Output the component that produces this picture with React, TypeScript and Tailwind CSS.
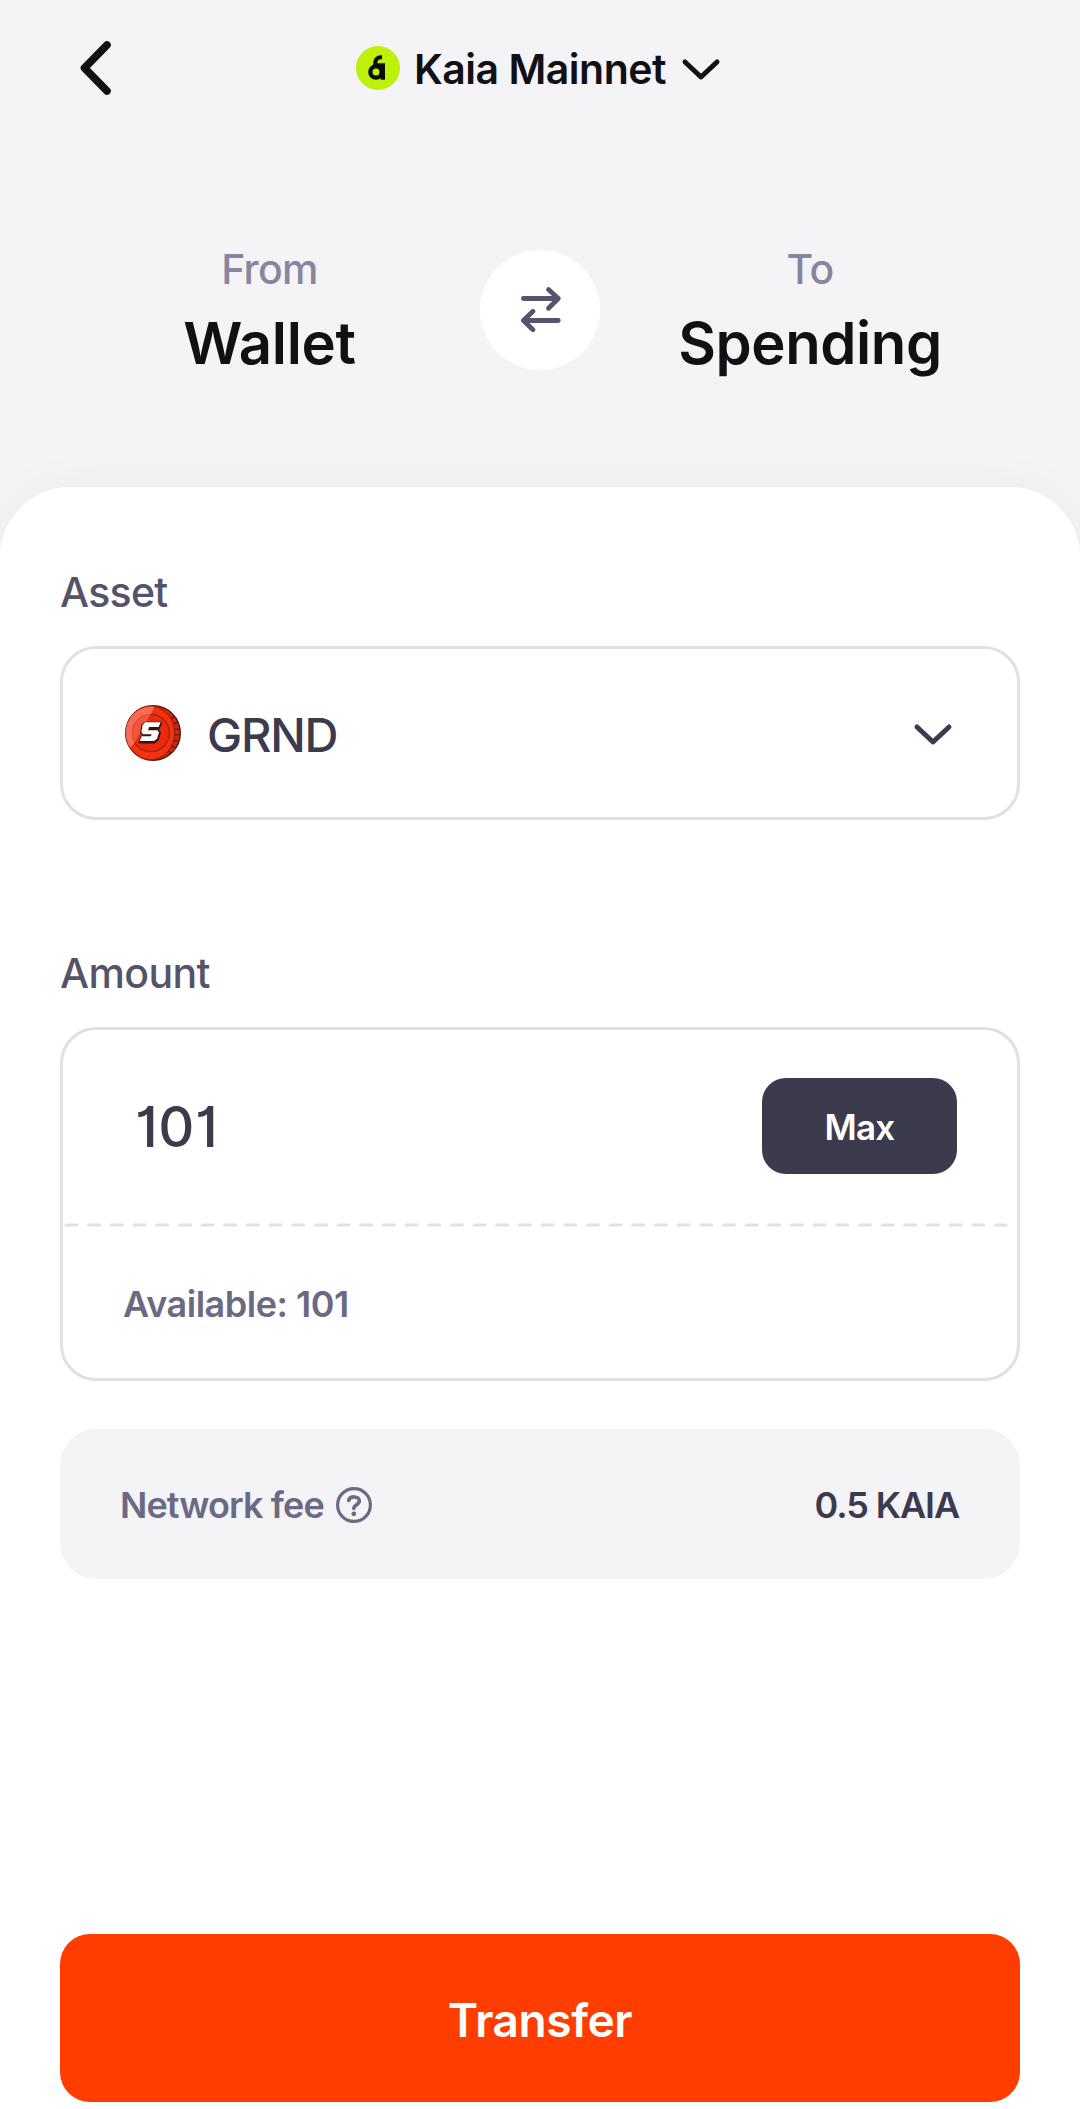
import React, { useState } from 'react';

const AVAILABLE = '101';

const KaiaLogo: React.FC = () => (
  <svg viewBox="0 0 132 132" className="w-11 h-11 shrink-0">
    <circle cx="66" cy="66" r="66" fill="#bff009" />
    <g fill="none" stroke="#0b0c0a" strokeWidth="13">
      <circle cx="60" cy="78" r="17" />
      <path d="M60 58.5H87M80.5 52V101" />
      <path d="M78 34C63 33 57 40 57 60" strokeWidth="12" />
    </g>
  </svg>
);

const CoinIcon: React.FC = () => (
  <svg viewBox="0 0 168 168" className="w-14 h-14 shrink-0">
    <circle cx="84" cy="84" r="82" fill="#cf260d" stroke="#4f160d" strokeWidth="4" />
    {/* Ridged edge */}
    <path
      d="M133 43l15-7M143 57l16-4M148 73l18-1M149 89h17M145 105l17 4M137 121l16 8M126 134l12 11"
      stroke="#6b190d"
      strokeWidth="4"
    />
    <ellipse cx="76" cy="84" rx="73" ry="80" fill="#f3310f" stroke="#8e1c0b" strokeWidth="3" />
    <circle cx="77" cy="84" r="56" fill="#e92b0c" stroke="#9d2410" strokeWidth="4" />
    <path d="M88 4A80 80 0 0 0 15 128L29 113A56 56 0 0 1 58 31L78 28Z" fill="#ff8a78" fillOpacity=".65" />
    <path d="M76 28A56 56 0 0 0 29 113Z" fill="#ff6e59" fillOpacity=".6" />
    <path
      d="M60 54H108L101 70H74L72 76H99L104 83L98 103L88 112H44L50 96H77L79 90H56L49 82L53 61Z"
      fill="#351410"
      stroke="#351410"
      strokeWidth="7"
      strokeLinejoin="round"
    />
    <path d="M60 52H107L101 66H72L69 76H97L102 82L96 101L87 108H44L50 94H77L80 88H54L49 81L53 60Z" fill="#fff" />
  </svg>
);

const ChevronDown: React.FC<{ className: string }> = ({ className }) => (
  <svg viewBox="0 0 40 24" className={`w-10 h-6 shrink-0 ${className}`}>
    <path d="M4 4L20 19L36 4" fill="none" stroke="currentColor" strokeWidth="5" strokeLinecap="round" strokeLinejoin="round" />
  </svg>
);

const App: React.FC = () => {
  const [amount, setAmount] = useState(AVAILABLE);
  const [route, setRoute] = useState(['Wallet', 'Spending']);

  return (
    <div className="w-full h-[2109px] flex flex-col bg-[#f4f4f7] font-['Inter',sans-serif] overflow-hidden">
      <header className="h-[136px] shrink-0 grid grid-cols-[356px_1fr_356px] items-center">
        <button className="pl-[76px] text-[#111115]">
          <svg viewBox="0 0 40 60" className="w-10 h-15">
            <path d="M31 7L8.5 30L31 53" fill="none" stroke="currentColor" strokeWidth="7.6" strokeLinecap="round" strokeLinejoin="round" />
          </svg>
        </button>
        <button className="flex items-center whitespace-nowrap text-[#111115]">
          <KaiaLogo />
          <span className="ml-3.5 mt-0.5 w-[252px] text-left text-[41px] leading-[50px] font-[560] tracking-[-0.5px]">Kaia Mainnet</span>
          <ChevronDown className="ml-[15px] mt-[3px]" />
        </button>
      </header>

      <section className="h-[351px] shrink-0 px-15 pt-[114px] grid grid-cols-[1fr_120px_1fr] items-start text-center">
        <div className="-mt-[7px]">
          <div className="pr-px text-[41px] leading-[52px] font-[460] tracking-[-0.7px] text-[#8785a0]">From</div>
          <div className="mt-[13px] pr-px text-[58px] leading-[70px] font-semibold tracking-[-0.3px] text-[#111115]">{route[0]}</div>
        </div>
        <button
          onClick={() => setRoute([route[1], route[0]])}
          className="w-30 h-30 rounded-full bg-white flex items-center justify-center text-[#55536d]"
        >
          <svg viewBox="0 0 48 48" className="w-12 h-12">
            <path
              d="M7.4 12.5H42.3M32.5 3.5L42.3 12.5L32.5 22.3M42.3 34.5H7.4M17 25.3L7.4 34.5L17 43.7"
              fill="none"
              stroke="currentColor"
              strokeWidth="4.8"
              strokeLinecap="round"
              strokeLinejoin="round"
            />
          </svg>
        </button>
        <div className="-mt-[7px]">
          <div className="text-[41px] leading-[52px] font-[460] tracking-[-0.7px] text-[#8785a0]">To</div>
          <div className="mt-[13px] text-[58px] leading-[70px] font-semibold tracking-[-0.4px] text-[#111115]">{route[1]}</div>
        </div>
      </section>

      <main className="flex-1 flex flex-col px-15 pt-[79px] rounded-t-[70px] bg-white shadow-[0_0_50px_rgba(0,0,0,0.04)]">
        <label className="text-[41px] leading-[52px] font-[460] tracking-[-0.7px] text-[#55536a]">Asset</label>
        <button className="mt-7 h-[174px] shrink-0 flex items-center border-3 border-[#e0e0e6] rounded-[36px] pl-[62px] pr-[64px] text-[#3c3b4e]">
          <CoinIcon />
          <span className="ml-[26px] mt-1 text-[47px] leading-[60px] font-[460] tracking-[-1.2px]">GRND</span>
          <ChevronDown className="ml-auto mt-[3px]" />
        </button>

        <label className="mt-[127px] text-[41px] leading-[52px] font-[460] tracking-[-0.6px] text-[#55536a]">Amount</label>
        <div className="mt-7 h-[354px] shrink-0 flex flex-col border-3 border-[#e0e0e6] rounded-[36px]">
          <div className="mt-12 h-24 flex items-center justify-between pl-[72px] pr-15">
            <input
              value={amount}
              onChange={(e) => setAmount(e.target.value)}
              className="w-[400px] h-20 mt-0.5 p-0 outline-none text-[56px] font-medium tracking-[0.5px] text-[#3c3b4e] [font-feature-settings:'cv01']"
            />
            <button
              onClick={() => setAmount(AVAILABLE)}
              className="w-[195px] h-24 pt-0.5 rounded-3xl bg-[#3c3b4e] text-white text-[35px] font-semibold tracking-[-0.7px]"
            >
              Max
            </button>
          </div>
          {/* Rounded dashes, CSS borders can't space them */}
          <svg viewBox="0 0 954 4" className="mt-[49px] h-1 w-full shrink-0">
            <path d="M3 2H943" stroke="#e0e0e6" strokeWidth="3" strokeLinecap="round" strokeDasharray="11 11.67" />
          </svg>
          <div className="mt-[53px] pl-[60px] text-[36px] leading-[48px] font-[560] tracking-[-0.5px] text-[#6b6984]">
            Available: {AVAILABLE}
          </div>
        </div>

        <div className="mt-12 h-[150px] shrink-0 px-15 flex items-center justify-between rounded-[36px] bg-[#f4f4f7] text-[36px] leading-[48px] font-[560] tracking-[-0.9px]">
          <div className="flex items-center text-[#6b6984]">
            <span className="mt-0.5 w-[204px] whitespace-nowrap">Network fee</span>
            <svg viewBox="0 0 36 36" className="ml-3 mt-0.5 w-9 h-9" fill="none" stroke="currentColor" strokeLinecap="round">
              <circle cx="18" cy="18" r="16.4" strokeWidth="3.2" />
              <path d="M12.7 13.5C13.8 8.7 23.3 8.6 23.3 14C23.3 17.8 17.8 17.6 17.8 21.5" strokeWidth="3.6" />
              <circle cx="17.8" cy="26.8" r="2.4" fill="currentColor" stroke="none" />
            </svg>
          </div>
          <div className="mt-0.5 pr-px tracking-[-1.1px] text-[#3c3b4e]">0.5 KAIA</div>
        </div>

        <button className="mt-[355px] h-[168px] pt-1 shrink-0 rounded-[30px] bg-[#ff3d00] text-white text-[46px] font-semibold tracking-[-0.4px]">
          Transfer
        </button>
      </main>
    </div>
  );
};

export default App;
